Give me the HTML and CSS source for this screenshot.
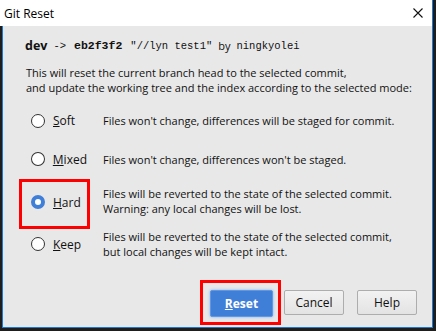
FILE: index.html
```html
<!DOCTYPE HTML>
<html>
<head>
    <meta charset="utf-8">
    <title>Git Reset</title>
    <link rel="stylesheet" href="styles.css">
</head>
<body>
<div class="window">
    <div class="titlebar">
        <span class="title">Git Reset</span>
        <svg class="close" width="10" height="10" viewBox="0 0 10 10">
            <path d="M0.5 0.5 L9.5 9.5 M9.5 0.5 L0.5 9.5" stroke="#111" stroke-width="1.1" fill="none"/>
        </svg>
    </div>
    <div class="content">
        <div class="head">
            <b class="branch">dev</b>
            <span class="mono">-&gt;</span>
            <b class="mono hash">eb2f3f2</b>
            <span class="mono">"//lyn test1"</span>
            <span>by</span>
            <span class="mono">ningkyolei</span>
        </div>
        <p class="intro">This will reset the current branch head to the selected commit,<br>and update the working tree and the index according to the selected mode:</p>

        <div class="options">
            <div class="opt soft">
                <div class="pick"><span class="radio"></span><span><u>S</u>oft</span></div>
                <div class="desc">Files won't change, differences will be staged for commit.</div>
            </div>
            <div class="opt mixed">
                <div class="pick"><span class="radio"></span><span><u>M</u>ixed</span></div>
                <div class="desc">Files won't change, differences won't be staged.</div>
            </div>
            <div class="opt hard">
                <div class="pick marked"><span class="radio on"></span><span><u>H</u>ard</span></div>
                <div class="desc">Files will be reverted to the state of the selected commit.<br>Warning: any local changes will be lost.</div>
            </div>
            <div class="opt keep">
                <div class="pick"><span class="radio"></span><span><u>K</u>eep</span></div>
                <div class="desc">Files will be reverted to the state of the selected commit,<br>but local changes will be kept intact.</div>
            </div>
        </div>

        <div class="buttons">
            <div class="mark"><button class="btn primary"><u>R</u>eset</button></div>
            <button class="btn cancel">Cancel</button>
            <button class="btn help">Help</button>
        </div>
    </div>
</div>
</body>
</html>
```

FILE: styles.css
```css
* {
    margin: 0;
    padding: 0;
    box-sizing: border-box;
}

body {
    background: #1e1e1e;
    width: 436px;
    height: 331px;
    overflow: hidden;
    font-family: "Open Sans", "Noto Sans", sans-serif;
    font-size: 11px;
    color: #111;
}

.window {
    margin-left: 2px;
    width: 431px;
    height: 328px;
    border: 1px solid #1c7ad6;
    border-top: none;
    background: #e8e8e8;
    display: flex;
    flex-direction: column;
}

.titlebar {
    height: 26px;
    background: #fff;
    display: flex;
    align-items: center;
    justify-content: space-between;
    padding: 0 8px 0 4px;
    margin-left: -3px;
}

.title {
    font-size: 12px;
    color: #000;
}

.close {
    margin-right: 1px;
}

.content {
    flex: 1;
    display: flex;
    flex-direction: column;
    padding: 0 15px 0 16px;
}

.head {
    height: 33px;
    padding-top: 6px;
    padding-left: 6px;
    display: flex;
    align-items: center;
    gap: 6px;
    white-space: pre;
}

.branch {
    font-size: 12.5px;
}

.mono {
    font-family: "Liberation Mono", monospace;
    font-size: 10.5px;
}

.hash {
    font-size: 11.5px;
    margin: 0 2px;
}

.intro {
    margin-top: 6px;
    padding-left: 7px;
    line-height: 15px;
}

.options {
    margin-top: 7px;
    display: flex;
    flex-direction: column;
}

.opt {
    display: flex;
    align-items: center;
}

.soft { height: 37px; }
.mixed { height: 40px; }
.hard { height: 50px; }
.keep { height: 30px; }

.pick {
    width: 71px;
    height: 50px;
    border: 3px solid transparent;
    display: flex;
    align-items: center;
    gap: 8px;
    padding-left: 9px;
    font-size: 12px;
}

.pick.marked {
    border-color: #f00;
    padding-bottom: 4px;
}

.radio {
    width: 14px;
    height: 14px;
    border-radius: 50%;
    border: 1.5px solid #333;
    background: #fff;
}

.radio.on {
    border: 4px solid #3f7fd8;
    background: #fff;
}

.desc {
    margin-left: 13px;
    line-height: 15px;
}

.hard .desc {
    margin-top: -6px;
}

.buttons {
    margin-top: auto;
    margin-bottom: 2px;
    display: flex;
    justify-content: flex-end;
    align-items: center;
}

.mark {
    width: 81px;
    height: 45px;
    border: 3px solid #f00;
    padding: 7px 5px 5px 7px;
}

.btn {
    font-family: "Open Sans", "Noto Sans", sans-serif;
    font-size: 12px;
    color: #111;
    width: 60px;
    height: 25px;
    border: 1px solid #adadad;
    border-radius: 2px;
    background: linear-gradient(#f2f2f2, #e3e3e3);
}

.primary {
    width: 63px;
    height: 27px;
    color: #fff;
    font-weight: bold;
    border: 1px solid #5f98e4;
    background: #3f7fd8;
    box-shadow: 0 0 3px #7fb0ee;
}

.cancel {
    margin-left: 3px;
}

.help {
    margin-left: 13px;
}
```
